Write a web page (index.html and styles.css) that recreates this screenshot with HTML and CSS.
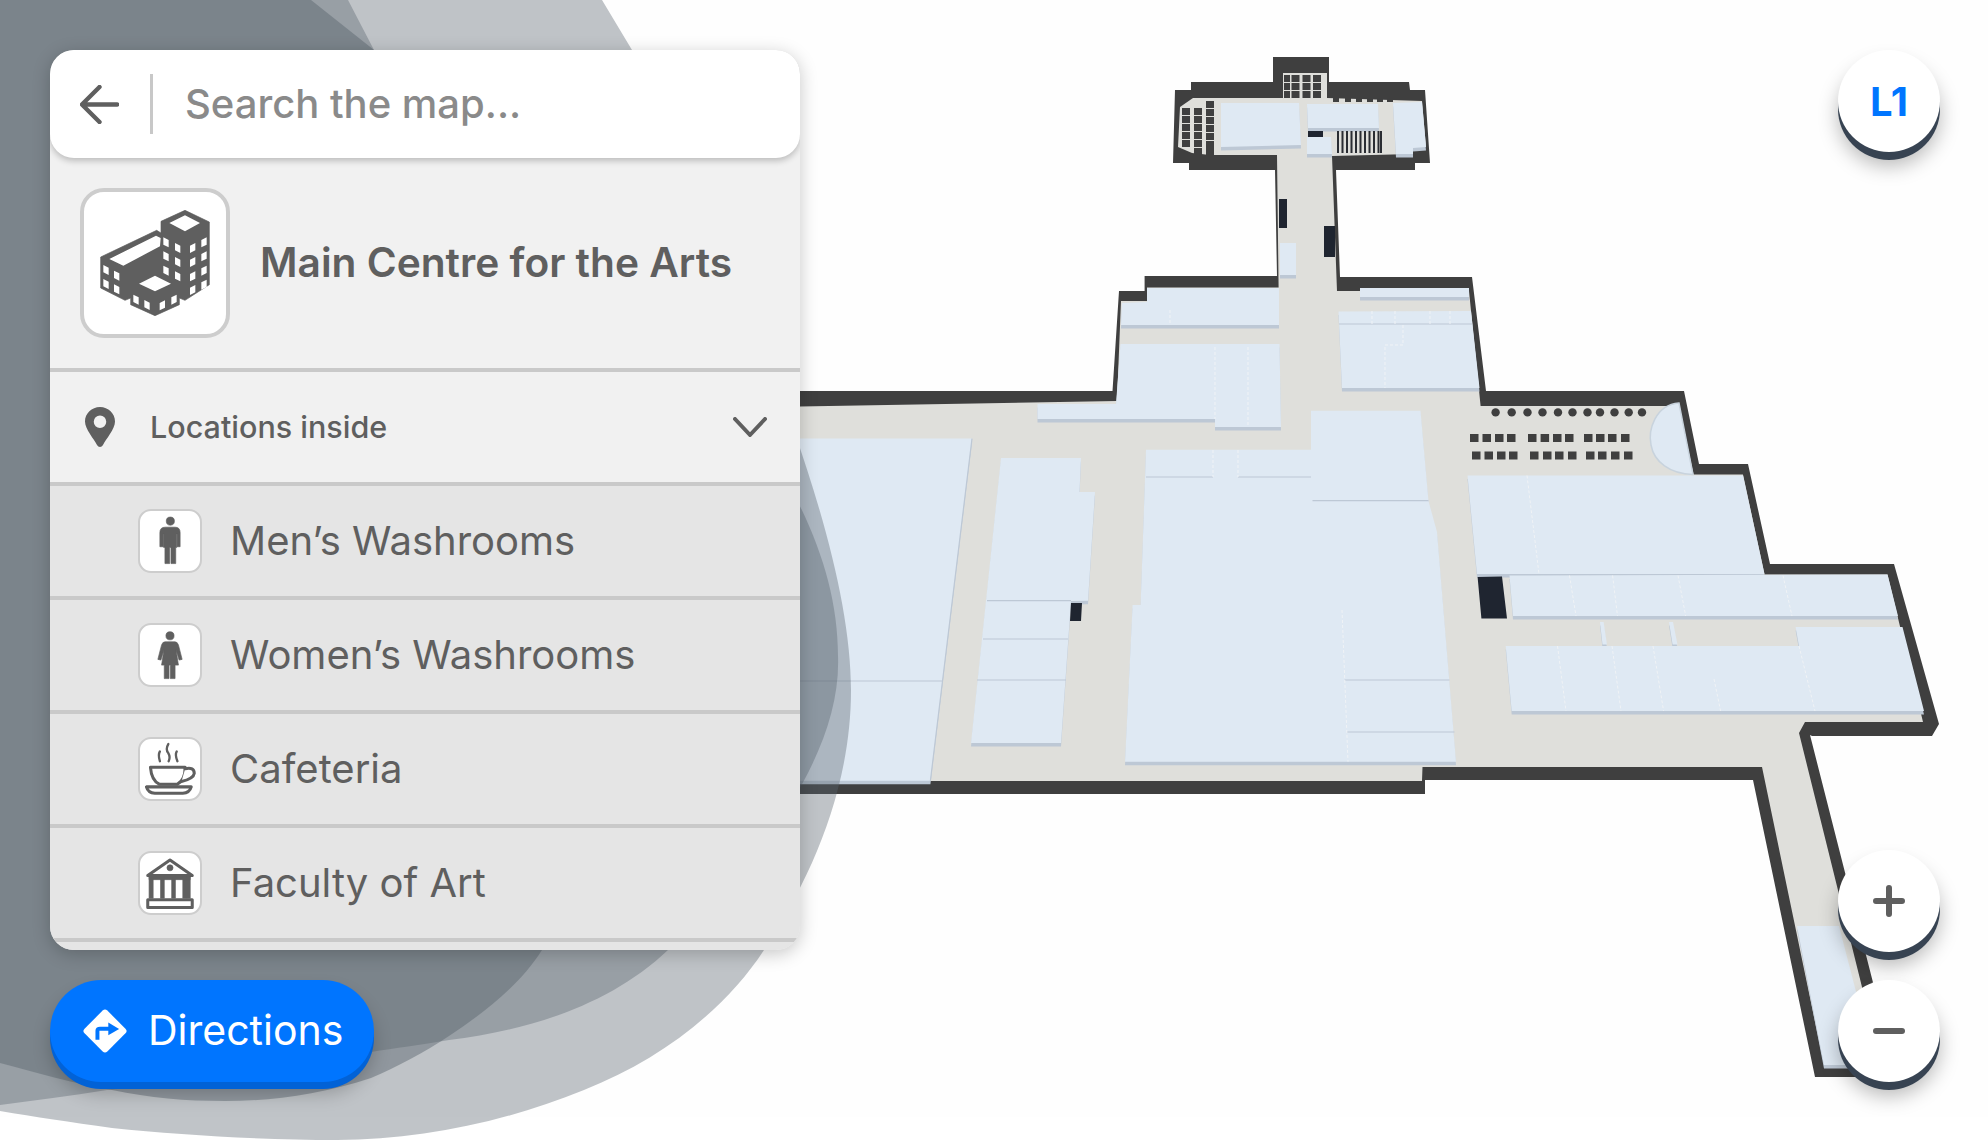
FILE: index.html
```html
<!DOCTYPE html>
<html lang="en">
<head>
<meta charset="utf-8">
<title>Campus map</title>
<link rel="stylesheet" href="styles.css">
</head>
<body>
<div class="app">
  <svg class="map" viewBox="0 0 1988 1140" width="1988" height="1140" aria-hidden="true">
    <defs>
      <path id="rooms" d="M1221 103H1299L1301 145L1221 147Z M1307 104H1378L1379 128H1308Z M1307 137H1331L1332 154H1307Z M1393 103L1422 102L1426 147L1413 148L1413 154H1396Z M1280 243H1296V275H1280Z
      M1122 303L1147 302V288H1279V325H1121Z M1120.5 344H1279.5L1281 427H1215V419H1037.5V404H1116Z M1360 288H1469V297H1360Z M1338.5 311.5L1471 311L1479.5 388H1342Z
      M800 438.6H972L930.4 780.7H800Z M1001 458H1081L1079.5 492H1095L1088 600.7L1071 601L1061 743H971Z
      M1146 449.7H1311V410.7H1420.5L1428.5 501L1437 532L1456 761.7H1125L1132.6 605H1140.6Z
      M1467.5 475.5H1743L1764.5 574H1477Z M1509.5 575.5L1887.5 574.5L1898 616H1513Z
      M1795.6 627H1902.5L1924 711H1511.7L1505.7 646H1799Z M1600 622H1603.6L1607 644.5H1602.5Z M1669 622H1673L1677.5 644.5H1672.6Z
      M1797 926H1839L1875 1065H1824Z"/>
    </defs>
    <rect class="map-ground" x="0" y="0" width="1988" height="1117"/>
    <path class="wall" d="M1273 57H1329V82H1409L1410 90H1425L1430 163H1415V170H1336L1340 277H1472L1486 391H1684L1699 464H1748L1770 564H1894L1939 724L1932 736H1812L1810 735L1880 1010V1077H1815L1753 780H1425V794H800V391H1112.5L1119 291H1144.6V276H1277L1275 170H1189V163H1173L1175 90H1191V82H1273Z"/>
    <path class="floor" d="M1283 73H1327V98L1422 101L1426 147L1413 148L1412 154L1332 156L1337 291H1469L1480.6 406H1679L1693.6 474.5H1743L1764.5 574.5H1887.5L1923 722H1805L1799 733L1862 987L1880 1065H1824L1762 767H1422.5L1422 781H800V406.5L1117 401L1121 301H1147V287.6H1278.6L1277 155H1210L1192 153L1178 147L1180 107L1193 98H1283Z"/>
    <use href="#rooms" class="room-side" y="3.5"/>
    <use href="#rooms" class="room"/>
    <path class="semi" d="M1679 403C1655 405 1648 430 1651 445C1654 462 1670 474 1693 474.5Z"/>
    <path class="room-line" d="M1339 324H1472M987 600.7H1071M983 639H1068M977 680H1066M800 681H943M1146 477H1213M1238 477H1311M1312.5 500.7H1428.5M1344.6 680H1449.5M1347 732H1454.5M972 438.6L930.4 780.7"/>
    <path class="room-gap" d="M1213 450V477M1238 450V477M1342 610L1348 761.7M1527 475.5L1539 574M1569.5 575.5L1576 616M1612.6 575.5L1617.5 616M1678 575.5L1685.7 616M1783 575.5L1792 616M1557.5 646L1566 711M1612 646L1621 711M1653 646L1663.6 711M1714 679L1720.6 711M1799 646L1815 711M1215 347V419M1248 347V427M1170 310V325M1403 325V345H1385V388M1372 311V324M1395 311V324M1430 311V324M1450 311V324"/>
    <path class="dark-block" d="M1308 131H1323V137H1308Z M1279 199H1287V228H1279Z M1324 226H1335V257H1324Z M1477.6 577L1502 576.5L1507 618.6H1481.4Z M1071 603H1082L1081 621H1070Z"/>
    <path class="stripes" d="M1338 131V153M1342.5 131V153M1347 131V153M1351.5 131V153M1356 131V153M1360.5 131V153M1365 131V153M1369.5 131V153M1374 131V153M1378.5 131V153M1381 131V153"/>
    <path class="cells" d="M1284 75h6v7h-6zM1291.500 75h8v7h-8zM1302.500 75h8v7h-8zM1313 75h8v7h-8zM1284 83h6v7h-6zM1291.500 83h8v7h-8zM1302.500 83h8v7h-8zM1313 83h8v7h-8zM1284 91h6v7h-6zM1291.500 91h8v7h-8zM1302.500 91h8v7h-8zM1313 91h8v7h-8z
    M1182 108h8v7h-8zM1194 108h8v7h-8zM1206 101h8v7h-8zM1206 109h8v7h-8zM1182 116h8v7h-8zM1194 116h8v7h-8zM1206 117h8v7h-8zM1182 124h8v7h-8zM1194 124h8v7h-8zM1206 125h8v7h-8zM1182 132h8v7h-8zM1194 132h8v7h-8zM1206 133h8v7h-8zM1182 140h8v7h-8zM1194 140h8v7h-8zM1206 141h8v7h-8zM1194 148h8v7h-8zM1206 148h8v7h-8z
    M1333 97h6v5h-6zM1345 97h6v5h-6zM1356 97h6v5h-6zM1367 97h6v5h-6zM1377 97h6v5h-6zM1387 97h6v5h-6z
    M1470 434h8.500v8h-8.500zM1482.500 434h8.500v8h-8.500zM1495 434h8.500v8h-8.500zM1507 434h8.500v8h-8.500zM1528 434h8.500v8h-8.500zM1540.600 434h8.500v8h-8.500zM1553 434h8.500v8h-8.500zM1565 434h8.500v8h-8.500zM1584 434h8.500v8h-8.500zM1596 434h8.500v8h-8.500zM1608 434h8.500v8h-8.500zM1621 434h8.500v8h-8.500z
    M1472 451.500h8.500v8h-8.500zM1484.500 451.500h8.500v8h-8.500zM1497 451.500h8.500v8h-8.500zM1509 451.500h8.500v8h-8.500zM1530 451.500h8.500v8h-8.500zM1543 451.500h8.500v8h-8.500zM1555 451.500h8.500v8h-8.500zM1568 451.500h8.500v8h-8.500zM1586 451.500h8.500v8h-8.500zM1598 451.500h8.500v8h-8.500zM1611 451.500h8.500v8h-8.500zM1624 451.500h8.500v8h-8.500z"/>
    <g class="pillars">
      <circle cx="1495.6" cy="412.4" r="4.2"/><circle cx="1511.7" cy="412.4" r="4.2"/><circle cx="1527.5" cy="412.4" r="4.2"/><circle cx="1542.5" cy="412.4" r="4.2"/><circle cx="1558" cy="412.4" r="4.2"/><circle cx="1572.500" cy="412.4" r="4.2"/><circle cx="1587.500" cy="412.4" r="4.2"/><circle cx="1600" cy="412.4" r="4.2"/><circle cx="1614.500" cy="412.4" r="4.2"/><circle cx="1628.700" cy="412.4" r="4.2"/><circle cx="1642" cy="412.4" r="4.2"/>
    </g>
    <path class="blob blob-light" d="M0 0H602L632 50C720 240 851 520 851 690C851 790 810 880 764 950C725 1010 660 1060 584 1090C505 1122 420 1140 337 1140C260 1140 180 1135 112 1128C70 1122 35 1117 0 1111Z"/>
    <path class="blob blob-mid" d="M0 0H348L374 50C560 220 838 430 838 656C842 760 750 870 668 950C610 1005 530 1030 449 1040C420 1045 395 1048 371 1052C280 1072 190 1082 107 1090C70 1096 35 1100 0 1105Z"/>
    <path class="blob blob-dark" d="M0 0H311L374 50C480 300 560 700 560 850C560 890 552 925 542 950C520 985 485 1012 449 1036C425 1052 395 1068 371 1078C320 1095 270 1101 225 1101C185 1101 150 1098 112 1090C75 1084 35 1072 0 1063Z"/>
  </svg>

  <div class="overlay">
    <div class="left-col">
      <section class="panel">
        <div class="search">
          <svg class="back" viewBox="0 0 40 40" aria-hidden="true"><path d="M38 20H3M20 2L2 20L20 38"/></svg>
          <span class="search-sep"></span>
          <span class="placeholder">Search the map...</span>
        </div>
        <div class="place">
          <div class="place-icon">
            <svg viewBox="72 67 426 426" aria-hidden="true">
              <path class="ico-fill" d="M375 122L448 157V345L375 392L358 385V405L285 438L212 405V385L195 392L122 355V262L290 182L303 190V155Z"/>
              <path class="ico-hole" d="M375 137L420 160L375 185L328 160Z M148 268L288 198L302 205L300 230L190 288Z M285 318L333 342L285 365L237 342Z
              M130 286l16 8v22l-16-8z M162 303l16 8v22l-16-8z M130 328l16 8v22l-16-8z M162 344l16 8v22l-16-8z
              M310 203l16 8v22l-16-8z M345 220l16 8v22l-16-8z M310 245l16 8v22l-16-8z M345 262l16 8v22l-16-8z M310 288l16 8v22l-16-8z M345 305l16 8v22l-16-8z
              M424 211l16-8v22l-16 8z M390 228l16-8v22l-16 8z M424 253l16-8v22l-16 8z M390 270l16-8v22l-16 8z M424 296l16-8v22l-16 8z M390 313l16-8v22l-16 8z M424 338l16-8v22l-16 8z M390 354l16-8v22l-16 8z
              M220 375l16 8v22l-16-8z M253 391l16 8v22l-16-8z M334 383l16-8v22l-16 8z M299 400l16-8v22l-16 8z"/>
            </svg>
          </div>
          <h1 class="place-name">Main Centre for the Arts</h1>
        </div>
        <div class="section-head">
          <svg class="pin" viewBox="0 0 30 40" aria-hidden="true"><path fill-rule="evenodd" d="M15 0C6.700 0 0 6.500 0 14.500C0 22 9 32 12 38C13.500 40.500 16.500 40.500 18 38C21 32 30 22 30 14.500C30 6.500 23.300 0 15 0ZM15 8.500A6.200 6.200 0 1 1 15 21A6.200 6.200 0 1 1 15 8.500Z"/></svg>
          <span class="section-title">Locations inside</span>
          <svg class="chevron" viewBox="0 0 34 20" aria-hidden="true"><path d="M2 2L17 18L32 2"/></svg>
        </div>
        <ul class="list">
          <li class="item">
            <span class="item-icon"><svg viewBox="61 64 178 178" aria-hidden="true">
              <circle class="ico-fill" cx="151" cy="94" r="12"/>
              <path class="ico-fill" d="M120 128Q120 112 136 112H165Q180 112 180 128V170H171V132H170V172H167V220H153V172H149V220H135V172H131V132H130V170H120Z"/>
            </svg></span>
            <span class="item-label">Men’s Washrooms</span>
          </li>
          <li class="item">
            <span class="item-icon"><svg viewBox="61 406 178 178" aria-hidden="true">
              <circle class="ico-fill" cx="150" cy="438" r="12"/>
              <path class="ico-fill" d="M135 456H165Q172 456 175 465L186 508L177 510L168 480L175 525H165V565H151V525H147V565H133V525H125L132 480L123 510L114 508L125 465Q128 456 135 456Z"/>
            </svg></span>
            <span class="item-label">Women’s Washrooms</span>
          </li>
          <li class="item">
            <span class="item-icon"><svg viewBox="61 58 178 178" aria-hidden="true">
              <path class="ico-line thin" d="M120 95Q114 105 120 124M145 73Q136 88 145 100Q152 112 146 124M170 95Q164 105 172 124"/>
              <path class="ico-line" d="M92 142H195Q195 180 172 192H118Q95 180 92 142Z"/>
              <path class="ico-line" d="M195 146Q222 140 222 160Q220 176 184 184"/>
              <path class="ico-line" d="M80 200H213Q208 218 188 219H105Q85 218 80 200Z"/>
            </svg></span>
            <span class="item-label">Cafeteria</span>
          </li>
          <li class="item">
            <span class="item-icon"><svg viewBox="61 401 178 178" aria-hidden="true">
              <path class="ico-line" d="M84 468L150 422L216 468Z"/>
              <circle class="ico-fill" cx="150" cy="445" r="9"/>
              <path class="ico-fill" d="M88 472H100V535H88ZM122 472H133V535H122ZM155 472H166V535H155ZM188 472H200V535H188ZM200 472H210V535H200ZM88 472H210V480H88Z"/>
              <path class="ico-line" d="M84 540H216V563H84Z"/>
            </svg></span>
            <span class="item-label">Faculty of Art</span>
          </li>
        </ul>
      </section>
      <button class="directions" type="button">
        <svg viewBox="125 143 140 140" aria-hidden="true">
          <rect class="dir-diamond" x="146" y="164" width="98" height="98" rx="10" transform="rotate(45 195 213)"/>
          <path class="dir-arrow" d="M172 240V212Q172 206 180 206H208"/>
          <path class="dir-head" d="M205 187L238 207L205 226Z"/>
        </svg>
        <span class="directions-label">Directions</span>
      </button>
    </div>
    <div class="right-col">
      <button class="round level" type="button">L1</button>
      <div class="zoom-group">
        <button class="round" type="button"><svg viewBox="0 0 32 32" aria-hidden="true"><path d="M3 16H29M16 3V29"/></svg></button>
        <button class="round" type="button"><svg viewBox="0 0 32 32" aria-hidden="true"><path d="M3 16H29"/></svg></button>
      </div>
    </div>
  </div>
</div>
</body>
</html>
```

FILE: styles.css
```css
* { box-sizing: border-box; }
html, body { margin: 0; padding: 0; background: #fff; }
body { font-family: Inter, "Noto Sans", sans-serif; color: #5f5f5f; }

.app { position: relative; width: 1988px; height: 1140px; overflow: hidden; background: #fff; }
.map { position: absolute; left: 0; top: 0; display: block; }
.map-ground { fill: #fefefe; }
.wall { fill: #3f3f3f; }
.floor { fill: #dfdfdb; }
.room { fill: #dfe9f3; }
.room-side { fill: #bdc8d5; }
.semi { fill: #dfe9f3; stroke: #c8d3dd; stroke-width: 1.5; }
.room-line { fill: none; stroke: #bdc8d5; stroke-width: 1.2; }
.room-gap { fill: none; stroke: #f0f3f6; stroke-width: 1; stroke-dasharray: 3 2; }
.dark-block { fill: #1f2530; }
.stripes { fill: none; stroke: #2a2d33; stroke-width: 2; }
.cells, .pillars { fill: #3f3f3f; }
.blob { fill: #59646e; }
.blob-light, .blob-mid { fill-opacity: .38; }
.blob-dark { fill-opacity: .46; }

.overlay { position: absolute; inset: 0; display: flex; justify-content: space-between; padding: 50px 48px 58px 50px; }
.left-col { display: flex; flex-direction: column; align-items: flex-start; gap: 30px; width: 750px; }
.right-col { display: flex; flex-direction: column; justify-content: space-between; }
.zoom-group { display: flex; flex-direction: column; gap: 28px; }

.panel { width: 750px; height: 900px; background: #f1f1f1; border-radius: 24px; box-shadow: 0 4px 18px rgba(0,0,0,.22); display: flex; flex-direction: column; overflow: hidden; }
.search { flex: none; height: 108px; background: #fff; border-radius: 24px; box-shadow: 0 3px 6px rgba(0,0,0,.22); display: flex; align-items: center; padding: 0 0 0 30px; position: relative; }
.back { width: 39px; height: 39px; fill: none; stroke: #5f5f5f; stroke-width: 4.5; stroke-linecap: round; stroke-linejoin: round; }
.search-sep { width: 3px; height: 60px; background: #c8c8c8; margin: 0 32px 0 31px; }
.placeholder { font-size: 40px; font-weight: 500; color: #8a8a8a; margin-top: -2px; }

.place { flex: none; height: 214px; display: flex; align-items: center; gap: 30px; padding-left: 30px; border-bottom: 4px solid #c9c9c9; }
.place-icon { width: 150px; height: 150px; background: #fff; border: 4px solid #cdcdcd; border-radius: 24px; flex: none; padding: 0; overflow: hidden; }
.place-icon svg { display: block; width: 142px; height: 142px; }
.place-name { margin: -2px 0 0; font-size: 40.7px; font-weight: 600; color: #5f5f5f; }
.ico-fill { fill: #5f5f5f; stroke: #5f5f5f; stroke-width: 2; stroke-linejoin: round; }
.ico-hole { fill: #fff; }
.ico-line { fill: #fff; stroke: #5f5f5f; stroke-width: 9; stroke-linejoin: round; stroke-linecap: round; }
.ico-line.thin { fill: none; stroke-width: 7; }

.section-head { flex: none; height: 114px; display: flex; align-items: center; padding: 0 33px 0 35px; border-bottom: 4px solid #c9c9c9; }
.pin { width: 30px; height: 40px; fill: #5f5f5f; flex: none; }
.section-title { font-size: 30.5px; font-weight: 500; margin: -2px 0 0 35px; flex: 1; }
.chevron { width: 34px; height: 20px; fill: none; stroke: #5f5f5f; stroke-width: 4; stroke-linecap: round; stroke-linejoin: round; }

.list { list-style: none; margin: 0; padding: 0; flex: 1; background: #e5e5e5; }
.item { height: 114px; display: flex; align-items: center; gap: 29px; padding-left: 88px; border-bottom: 4px solid #c9c9c9; }
.item-icon { width: 64px; height: 64px; background: #fff; border: 2px solid #cdcdcd; border-radius: 13px; flex: none; overflow: hidden; margin-top: -1px; }
.item-icon svg { display: block; width: 60px; height: 60px; }
.item-label { font-size: 40px; font-weight: 400; color: #5f5f5f; margin: -2px 0 0 -1px; }

.directions { width: 324px; height: 102px; border: 0; border-radius: 51px; background: #0075ff; color: #fff; box-shadow: 0 7px 0 #0262d6, 0 12px 18px rgba(0,0,0,.22); display: flex; align-items: center; gap: 20px; padding: 0 0 0 32px; font-family: inherit; font-size: 41px; font-weight: 400; }
.directions svg { width: 46px; height: 46px; flex: none; }
.directions-label { margin-top: -2px; }
.dir-diamond { fill: #fff; }
.dir-arrow { fill: none; stroke: #0075ff; stroke-width: 12; }
.dir-head { fill: #0075ff; }

.round { width: 102px; height: 102px; padding: 0; border: 0; border-radius: 50%; background: #fff; box-shadow: 0 8px 0 #374352, 0 14px 20px rgba(0,0,0,.28); display: flex; align-items: center; justify-content: center; font-family: inherit; }
.round svg { width: 32px; height: 32px; fill: none; stroke: #5f5f5f; stroke-width: 6; stroke-linecap: round; }
.level { font-size: 40px; font-weight: 700; color: #0075ff; }
```
